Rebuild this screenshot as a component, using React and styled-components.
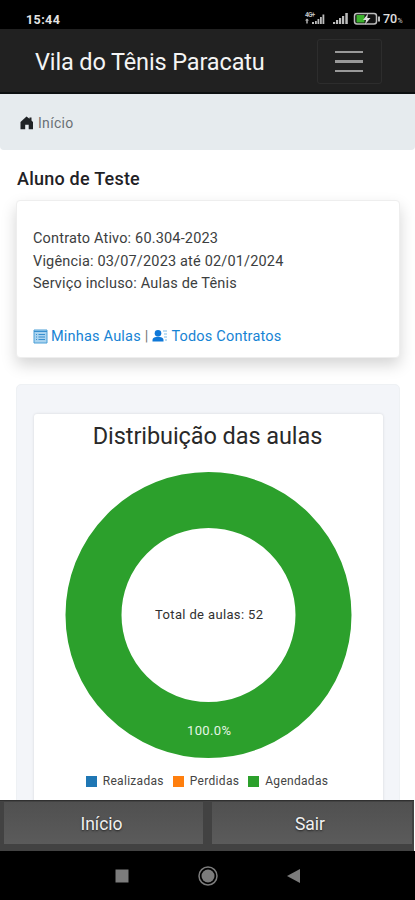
import React from "react";
import styled, { createGlobalStyle } from "styled-components";

const GlobalStyle = createGlobalStyle`
  * { box-sizing: border-box; }
  body { margin: 0; background: #fff; font-family: Roboto, "Liberation Sans", sans-serif; color: #212529; }
`;

const Screen = styled.div`
  width: 415px;
  height: 900px;
  overflow: hidden;
  display: flex;
  flex-direction: column;
  background: #fff;
`;

const StatusBar = styled.header`
  flex: none;
  height: 29px;
  padding: 9px 11px 0 26px;
  display: flex;
  justify-content: space-between;
  align-items: center;
  background: #000;
  color: #e4e4e4;
`;

const Clock = styled.span`
  font-size: 12.5px;
  font-weight: 700;
  letter-spacing: 0.4px;
`;

const Indicators = styled.svg`
  display: block;
  width: 100px;
  height: 18px;
`;

const Navbar = styled.nav`
  flex: none;
  height: 65px;
  padding: 0 33px 0 35px;
  display: flex;
  justify-content: space-between;
  align-items: center;
  background: #212121;
  border-bottom: 2px solid #0c1011;
`;

const Brand = styled.h1`
  margin: 2px 0 0;
  font-size: 23.5px;
  line-height: 30px;
  font-weight: 400;
  letter-spacing: -0.13px;
  color: #f4f4f4;
  white-space: nowrap;
`;

const MenuButton = styled.button`
  width: 65px;
  height: 45px;
  padding: 0;
  margin-top: 2px;
  display: flex;
  flex-direction: column;
  align-items: center;
  justify-content: center;
  gap: 7px;
  background: transparent;
  border: 1px solid #2d2d2d;
  border-radius: 3px;
`;

const MenuLine = styled.span`
  width: 28px;
  height: 2.5px;
  margin-left: -2px;
  background: #999;
`;

const Breadcrumb = styled.div`
  flex: none;
  height: 56px;
  padding: 1px 20px 0;
  display: flex;
  align-items: center;
  gap: 4px;
  background: #e6ebee;
  border-radius: 0 0 4px 4px;
  font-size: 14px;
  letter-spacing: 0.3px;
  color: #6a7075;
`;

const Content = styled.main`
  flex: 1;
  min-height: 0;
  overflow: hidden;
  padding: 17px 15px 0 16px;
  display: flex;
  flex-direction: column;
`;

const Student = styled.h2`
  flex: none;
  margin: 0 0 9px 1px;
  font-size: 18px;
  line-height: 24px;
  font-weight: 500;
  letter-spacing: 0.23px;
  color: #1f2226;
`;

const ContractCard = styled.section`
  flex: none;
  height: 158px;
  padding: 27px 17px 0 16px;
  background: #fff;
  border: 1px solid #eeeeee;
  border-radius: 4px;
  box-shadow: 0 7px 15px rgba(0, 0, 0, 0.17);
`;

const Detail = styled.p`
  margin: 0;
  width: max-content;
  font-size: 14.5px;
  line-height: 22.5px;
  letter-spacing: 0.17px;
  color: #3c3e40;
`;

const Links = styled.div`
  margin-top: 29px;
  display: flex;
  align-items: center;
  gap: 4px;
  height: 23px;
  font-size: 14.5px;
  color: #444;
`;

const Separator = styled.span`
  color: #777;
`;

const Link = styled.a`
  display: flex;
  align-items: center;
  gap: 3px;
  color: #1683d4;
  letter-spacing: 0.2px;
  white-space: nowrap;
`;

const ChartPanel = styled.section`
  flex: none;
  width: 384px;
  height: 460px;
  margin-top: 26px;
  padding: 29px 16px 0 17px;
  background: #f3f5f9;
  border-radius: 5px;
  border: 1px solid #eef1f4;
`;

const ChartCard = styled.div`
  height: 420px;
  padding: 7px 2px 0 0;
  background: #fff;
  border-radius: 3px;
  box-shadow: 0 0 3px rgba(0, 0, 0, 0.12);
  display: flex;
  flex-direction: column;
  align-items: center;
`;

const ChartTitle = styled.h3`
  margin: 0;
  font-size: 23.5px;
  line-height: 30px;
  font-weight: 400;
  letter-spacing: -0.08px;
  color: #292929;
  white-space: nowrap;
`;

const Donut = styled.svg`
  display: block;
  flex: none;
  width: 288px;
  height: 288px;
  margin-top: 20px;
  font-family: Roboto, sans-serif;
`;

const Legend = styled.div`
  margin-top: 13px;
  padding-right: 1px;
  display: flex;
  gap: 9px;
`;

const LegendItem = styled.span`
  display: flex;
  align-items: center;
  gap: 6px;
  font-size: 12px;
  line-height: 18px;
  letter-spacing: 0.3px;
  color: #444;
  &::before {
    content: "";
    width: 11px;
    height: 11px;
    background: ${(p) => p.$color};
  }
`;

const BottomBar = styled.div`
  flex: none;
  width: 414px;
  height: 51px;
  padding: 1px 2px 7px 4px;
  display: grid;
  grid-template-columns: 199px 200px;
  justify-content: space-between;
  background: #424242;
  border-top: 1px solid #303030;
`;

const BarButton = styled.button`
  padding: 1px 4px 0 0;
  border: 0;
  background: linear-gradient(#505050, #5b5b5b);
  color: #f0f0f0;
  font: 400 17.5px Roboto, sans-serif;
  text-shadow: 0 1px 2px #222;
`;

const SystemNav = styled.footer`
  flex: none;
  height: 49px;
  padding-left: 115px;
  display: flex;
  align-items: center;
  gap: 69px;
  background: #000;
`;

const NavIcon = styled.svg`
  display: block;
  width: ${(p) => p.$w}px;
  height: 20px;
  fill: #7c7c7c;
`;

const lessons = [
  { label: "Realizadas", color: "#1f77b4" },
  { label: "Perdidas", color: "#ff7f0e" },
  { label: "Agendadas", color: "#2ca02c" },
];

function StatusIcons() {
  return (
    <Indicators viewBox="304 10 100 18" fill="#bcbcbc">
      <text x="305" y="17" fontSize="6.500" fontWeight="700" textLength="10">4G+</text>
      <path d="M307 18.500l2 2h-1.300v3h-1.400v-3H305zM312 24v-2h2v2zM315 24v-3h1.800v3zM317.500 24v-5h1.800v5zM320 24v-7h1.800v7zM322.500 24v-9.500h1.800V24z" />
      <path d="M333 24v-2h2.200v2zM336 24v-4h2.200v4zM339 24v-6h2.200v6zM342 24v-8h2.200v8zM345.300 24V13h2.500V24z" />
      <rect x="354.500" y="13.500" width="22" height="10.500" rx="2.500" fill="#111" stroke="#bcbcbc" strokeWidth="1.500" />
      <path d="M356.500 15h8v7.500h-8z" fill="#3bb12c" />
      <path d="M378 16.500h2v5h-2z" />
      <path d="M368 13.500l-5 6.500h3l-1 4.500 5.500-6.500h-3.200z" fill="#ddd" />
      <text x="383" y="23" fontSize="12.500" fontWeight="500" textLength="14" fill="#e0e0e0">70</text>
      <text x="397.500" y="23" fontSize="7" textLength="5.500" fill="#d0d0d0">%</text>
    </Indicators>
  );
}

function HouseIcon() {
  return (
    <svg width="14" height="14" viewBox="0 0 14 14" fill="#202326">
      <path d="M6.500.5 9.500 2.800V1.500h2V4.500L13 6v7.300H8.700V8.700H5.200V13.300H.5V6z" />
    </svg>
  );
}

function ListIcon() {
  return (
    <svg width="15" height="15" viewBox="0 0 15 15">
      <path d="M1 1h13v13H1z" fill="#a9d3ef" stroke="#4b9fd7" />
      <path d="M1 2.500h13M3 5.500h1M5.500 5.500H12M3 8h1M5.500 8H12M3 10.500h1M5.500 10.500H12" stroke="#388fce" />
    </svg>
  );
}

function PersonIcon() {
  return (
    <svg width="16" height="14" viewBox="0 0 16 14" fill="#0f78d8">
      <circle cx="6" cy="4.200" r="3.300" />
      <path d="M.5 12.500V11c0-2 2.600-3.200 5.500-3.200s5.500 1.200 5.500 3.200v1.500z" />
      <path d="M11 2h4M12 5H15M12 8H15M13 11H15" stroke="#7bbbe8" />
    </svg>
  );
}

export default function App() {
  return (
    <Screen>
      <GlobalStyle />
      <StatusBar>
        <Clock>15:44</Clock>
        <StatusIcons />
      </StatusBar>
      <Navbar>
        <Brand>Vila do Tênis Paracatu</Brand>
        <MenuButton aria-label="Menu">
          <MenuLine />
          <MenuLine />
          <MenuLine />
        </MenuButton>
      </Navbar>
      <Breadcrumb>
        <HouseIcon />
        <span>Início</span>
      </Breadcrumb>
      <Content>
        <Student>Aluno de Teste</Student>
        <ContractCard>
          <Detail>Contrato Ativo: 60.304-2023</Detail>
          <Detail>Vigência: 03/07/2023 até 02/01/2024</Detail>
          <Detail>Serviço incluso: Aulas de Tênis</Detail>
          <Links>
            <Link><ListIcon />Minhas Aulas</Link>
            <Separator>|</Separator>
            <Link><PersonIcon />Todos Contratos</Link>
          </Links>
        </ContractCard>
        <ChartPanel>
          <ChartCard>
            <ChartTitle>Distribuição das aulas</ChartTitle>
            <Donut viewBox="0 0 288 288">
              <circle cx="144.500" cy="144" r="115" fill="none" stroke="#2ca02c" strokeWidth="56" />
              <text x="145" y="148" textAnchor="middle" fontSize="13" textLength="108" fill="#303030">Total de aulas: 52</text>
              <text x="145" y="264" textAnchor="middle" fontSize="13" textLength="44" fill="#e5f5e5">100.0%</text>
            </Donut>
            <Legend>
              {lessons.map((item) => (
                <LegendItem key={item.label} $color={item.color}>{item.label}</LegendItem>
              ))}
            </Legend>
          </ChartCard>
        </ChartPanel>
      </Content>
      <BottomBar>
        <BarButton>Início</BarButton>
        <BarButton>Sair</BarButton>
      </BottomBar>
      <SystemNav>
        <NavIcon $w={14} viewBox="0 0 14 20"><path d="M.5 3.500h13v13H.5z" /></NavIcon>
        <NavIcon $w={20} viewBox="0 0 20 20">
          <circle cx="10" cy="10" r="9" fill="none" stroke="#7c7c7c" strokeWidth="1.500" />
          <circle cx="10" cy="10" r="6.500" />
        </NavIcon>
        <NavIcon $w={14} viewBox="0 0 14 20"><path d="M13 3v14L0 10z" /></NavIcon>
      </SystemNav>
    </Screen>
  );
}
